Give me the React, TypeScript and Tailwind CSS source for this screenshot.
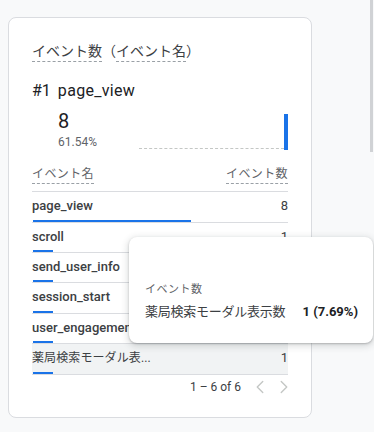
import React from "react";
import { ChevronLeft, ChevronRight } from "lucide-react";

const rows = [
  { name: "page_view", value: 8, pct: 61.54, h: "h-[31px]", jp: false },
  { name: "scroll", value: 1, pct: 7.69, h: "h-[30px]", jp: false },
  { name: "send_user_info", value: 1, pct: 7.69, h: "h-[30px]", jp: false },
  { name: "session_start", value: 1, pct: 7.69, h: "h-[31px]", jp: false },
  { name: "user_engagement", value: 1, pct: 7.69, h: "h-[30px]", jp: false },
  { name: "薬局検索モーダル表...", value: 1, pct: 7.69, h: "h-[31px]", jp: true },
];

export default function App() {
  return (
    <div className="relative h-[432px] w-[374px] overflow-hidden bg-[#f8f9fa] font-['Roboto','Noto_Sans_CJK_JP',sans-serif] text-[#3c4043]">
      {/* scrollbar thumb */}
      <div className="absolute left-[370px] top-0 h-[152px] w-[3px] bg-[#d0d2d5]" />

      <div className="pl-2 pt-[17px]">
        <div className="h-[401px] w-[304px] rounded-lg border border-[#dadce0] bg-white px-[23px] pt-[23px]">
          {/* title */}
          <div className="flex text-[14px] leading-[20px] text-[#3c4043]">
            <span className="border-b border-dashed border-[#9aa0a6]">イベント数</span>
            <span>（</span>
            <span className="border-b border-dashed border-[#9aa0a6]">イベント名</span>
            <span>）</span>
          </div>

          <div className="mt-[19px] flex text-[16px] leading-[20px] text-[#202124]">
            <span>#1</span>
            <span className="ml-[7px] tracking-[0.3px]">page_view</span>
          </div>

          <div className="flex items-end">
            <div className="ml-[26px] flex flex-col">
              <span className="mt-[8px] text-[20px] leading-[24px] text-[#202124]">8</span>
              <span className="mt-[1px] text-[12px] leading-[16px] text-[#5f6368]">61.54%</span>
            </div>
            <div className="ml-auto flex h-[36px] w-[149px] items-end">
              <div className="mb-[1px] flex-1 border-b border-dashed border-[#c4c7c5]" />
              <div className="h-[36px] w-[4px] bg-[#1a73e8]" />
            </div>
          </div>

          {/* table header */}
          <div className="mt-[17px] flex items-start justify-between border-b border-[#dadce0] pb-[7px] text-[12px] leading-[14px] tracking-[0.4px] text-[#5f6368]">
            <span className="border-b border-dashed border-[#9aa0a6] pb-[2px]">イベント名</span>
            <span className="border-b border-dashed border-[#9aa0a6] pb-[2px]">イベント数</span>
          </div>

          {rows.map((r, i) => (
            <div
              key={r.name}
              className={`${r.h} flex flex-col border-b border-[#dadce0] ${i === 5 ? "bg-[#f1f3f4]" : ""}`}
            >
              <div className="flex flex-1 items-center justify-between text-[13px] leading-[18px]">
                <span className={r.jp ? "text-[12px] tracking-[0.1px]" : "font-medium"}>{r.name}</span>
                <span>{r.value}</span>
              </div>
              <div className="ml-[1px] h-[2px] bg-[#1a73e8]" style={{ width: `${r.pct}%` }} />
            </div>
          ))}

          {/* pagination */}
          <div className="-mr-[8px] flex h-[24px] items-center justify-end text-[12px] text-[#3c4043]">
            <span className="mr-[7px]">1 – 6 of 6</span>
            <span className="flex h-[24px] w-[24px] items-center justify-center text-[#c4c7c5]">
              <ChevronLeft size={22} strokeWidth={1.5} />
            </span>
            <span className="flex h-[24px] w-[24px] items-center justify-center text-[#c4c7c5]">
              <ChevronRight size={22} strokeWidth={1.5} />
            </span>
          </div>
        </div>
      </div>

      {/* tooltip */}
      <div className="absolute left-[129px] top-[237px] h-[106px] w-[244px] rounded-lg bg-white pl-[16px] pr-[15px] pt-[45px] shadow-[0_1px_2px_rgba(60,64,67,0.3),0_2px_6px_2px_rgba(60,64,67,0.15)]">
        <div className="text-[11px] leading-[16px] tracking-[0.5px] text-[#5f6368]">イベント数</div>
        <div className="mt-[4px] flex items-center justify-between text-[13px] leading-[20px] text-[#3c4043]">
          <span className="tracking-[-0.25px]">薬局検索モーダル表示数</span>
          <span className="font-bold text-[#202124]">1 (7.69%)</span>
        </div>
      </div>
    </div>
  );
}
